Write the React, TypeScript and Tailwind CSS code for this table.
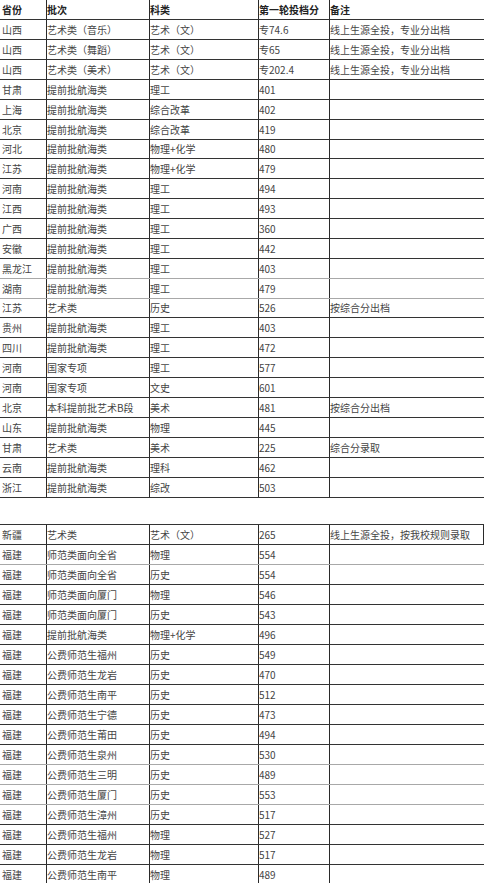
const upper: string[][] = [
  ['山西', '艺术类（音乐）', '艺术（文）', '专74.6', '线上生源全投，专业分出档'],
  ['山西', '艺术类（舞蹈）', '艺术（文）', '专65', '线上生源全投，专业分出档'],
  ['山西', '艺术类（美术）', '艺术（文）', '专202.4', '线上生源全投，专业分出档'],
  ['甘肃', '提前批航海类', '理工', '401', ''],
  ['上海', '提前批航海类', '综合改革', '402', ''],
  ['北京', '提前批航海类', '综合改革', '419', ''],
  ['河北', '提前批航海类', '物理+化学', '480', ''],
  ['江苏', '提前批航海类', '物理+化学', '479', ''],
  ['河南', '提前批航海类', '理工', '494', ''],
  ['江西', '提前批航海类', '理工', '493', ''],
  ['广西', '提前批航海类', '理工', '360', ''],
  ['安徽', '提前批航海类', '理工', '442', ''],
  ['黑龙江', '提前批航海类', '理工', '403', ''],
  ['湖南', '提前批航海类', '理工', '479', ''],
  ['江苏', '艺术类', '历史', '526', '按综合分出档'],
  ['贵州', '提前批航海类', '理工', '403', ''],
  ['四川', '提前批航海类', '理工', '472', ''],
  ['河南', '国家专项', '理工', '577', ''],
  ['河南', '国家专项', '文史', '601', ''],
  ['北京', '本科提前批艺术B段', '美术', '481', '按综合分出档'],
  ['山东', '提前批航海类', '物理', '445', ''],
  ['甘肃', '艺术类', '美术', '225', '综合分录取'],
  ['云南', '提前批航海类', '理科', '462', ''],
  ['浙江', '提前批航海类', '综改', '503', ''],
];

const lower: string[][] = [
  ['新疆', '艺术类', '艺术（文）', '265', '线上生源全投，按我校规则录取'],
  ['福建', '师范类面向全省', '物理', '554', ''],
  ['福建', '师范类面向全省', '历史', '554', ''],
  ['福建', '师范类面向厦门', '物理', '546', ''],
  ['福建', '师范类面向厦门', '历史', '543', ''],
  ['福建', '提前批航海类', '物理+化学', '496', ''],
  ['福建', '公费师范生福州', '历史', '549', ''],
  ['福建', '公费师范生龙岩', '历史', '470', ''],
  ['福建', '公费师范生南平', '历史', '512', ''],
  ['福建', '公费师范生宁德', '历史', '473', ''],
  ['福建', '公费师范生莆田', '历史', '494', ''],
  ['福建', '公费师范生泉州', '历史', '530', ''],
  ['福建', '公费师范生三明', '历史', '489', ''],
  ['福建', '公费师范生厦门', '历史', '553', ''],
  ['福建', '公费师范生漳州', '历史', '517', ''],
  ['福建', '公费师范生福州', '物理', '527', ''],
  ['福建', '公费师范生龙岩', '物理', '517', ''],
  ['福建', '公费师范生南平', '物理', '489', ''],
];

// rows that are one pixel shorter in the screenshot
const shortRows = [6, 14];
// rows whose bottom rule is grey instead of black
const greyUpper = [12, 13];
const greyLower = [1, 11, 12, 13];

function Row({ cells, short, head, grey }: { cells: string[]; short?: boolean; head?: boolean; grey?: boolean }) {
  return (
    <div
      className={`flex border-b ${grey ? 'border-[#a8a8a8]' : 'border-[#333]'} ${short ? 'h-[19px]' : 'h-[20px]'} ${
        head ? 'font-bold text-[#222]' : 'text-[#444]'
      }`}
    >
      <div className="w-[47px] shrink-0 border-r border-[#2a2a2a] pl-[2px] flex items-center">{cells[0]}</div>
      <div className="w-[103px] shrink-0 border-r border-[#2a2a2a] flex items-center">{cells[1]}</div>
      <div className="w-[109px] shrink-0 border-r border-[#2a2a2a] flex items-center">{cells[2]}</div>
      <div className="w-[71px] shrink-0 border-r border-[#2a2a2a] flex items-center">{cells[3]}</div>
      <div className="flex-1 flex items-center whitespace-nowrap">{cells[4]}</div>
    </div>
  );
}

export default function App() {
  return (
    <div
      className="w-[484px] min-h-[883px] bg-white text-[10px] leading-none overflow-hidden"
      style={{ fontFamily: '"Noto Sans CJK SC", "Noto Sans", sans-serif' }}
    >
      {/* first block */}
      <div>
        <Row head cells={['省份', '批次', '科类', '第一轮投档分', '备注']} />
        {upper.map((r, i) => (
          <Row key={i} cells={r} short={shortRows.includes(i)} grey={greyUpper.includes(i)} />
        ))}
      </div>

      {/* second block */}
      <div className="mt-[26px] border-t border-[#333] w-[484px]">
        {lower.map((r, i) => (
          <div key={i} className={i === 0 ? 'border-r border-[#2a2a2a]' : ''}>
            <Row cells={r} grey={greyLower.includes(i)} />
          </div>
        ))}
      </div>
    </div>
  );
}
